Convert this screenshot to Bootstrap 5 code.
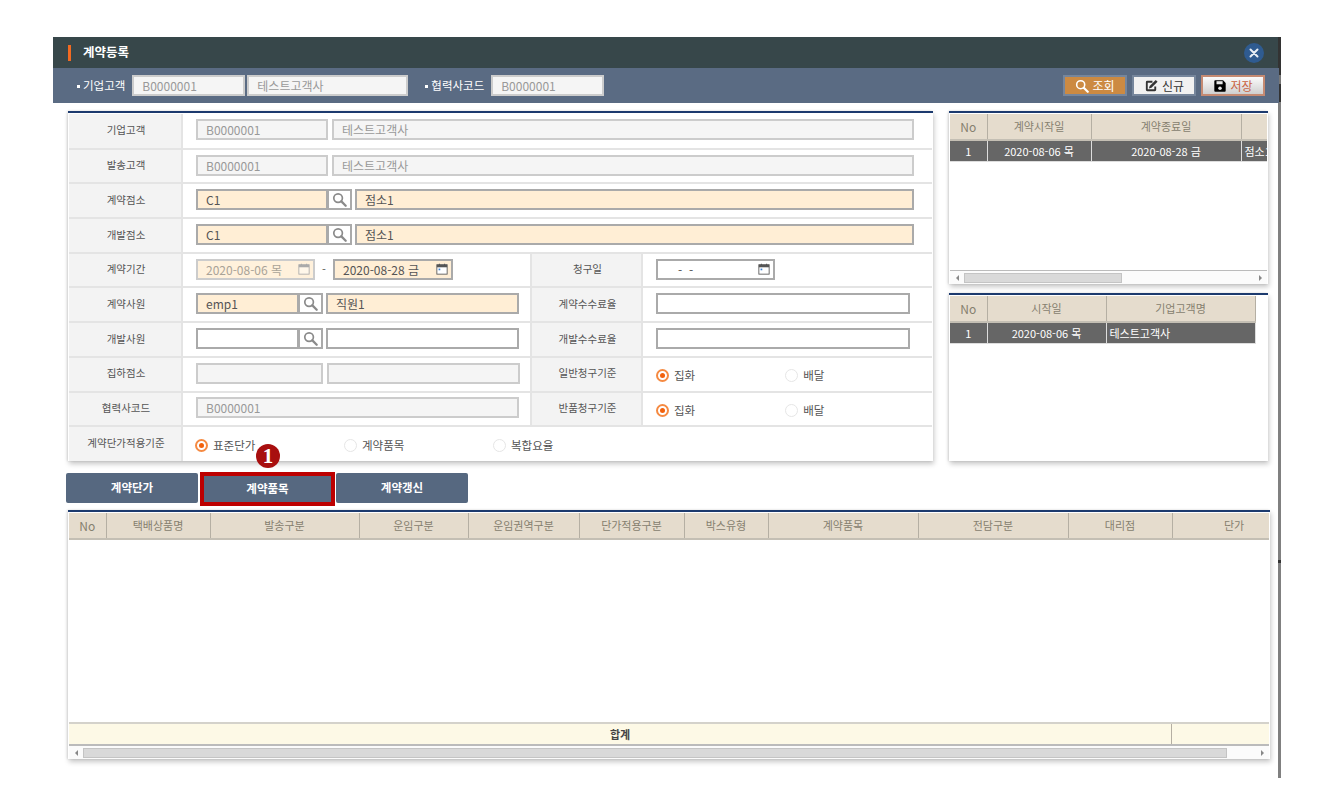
<!DOCTYPE html>
<html lang="ko">
<head>
<meta charset="UTF-8">
<title>계약등록</title>
<link href="https://cdn.jsdelivr.net/npm/bootstrap@5.3.0/dist/css/bootstrap.min.css" rel="stylesheet">
<style>
body { background: #fff; font-family: "Noto Sans CJK KR", "Noto Sans", sans-serif; font-size: 11px; color: #555; }
.win { margin: 37px 0 0 53px; width: 1228px; height: 741px; border-right: 3px solid #808080; border-image: linear-gradient(#333 0 39px, #777 39px 48px, #333 48px 66px, #808080 66px 523px, #333 523px 526px, #808080 526px) 1; }
.win-title { height: 31px; background: #37474a; color: #fff; font-size: 12.5px; font-weight: 700; padding: 0 14px 0 15px; }
.title-mark { width: 3px; height: 16px; background: #f26a21; margin-right: 12px; }
.btn-close-round { width: 20px; height: 20px; border-radius: 50%; background: #2f5b90; margin-left: auto; border: 0; padding: 0; }
.win-tool { height: 35px; background: #5a6b83; padding: 0 14px 0 24px; color: #fff; margin-right: -1px; font-size: 11.5px; }
.tool-label { margin-right: 7px; }
.tool-label::before { content: ""; display: inline-block; width: 3px; height: 3px; background: #fff; margin-right: 3px; vertical-align: middle; }
.tool-label-next { margin-left: 17px; }
.tool-name { margin-left: 2px; }
.tool-btns { gap: 5px; }
.field { height: 21px; border: 2px solid #aaa; background: #fff; color: #555; font-size: 12px; line-height: 17px; padding: 0 8px; white-space: nowrap; overflow: hidden; flex: none; }
.field-off { border-color: #ccc; background: #f5f5f5; color: #999; font-size: 12px; }
.field-req { background: #ffeed5; }
.field-date { display: flex; justify-content: space-between; align-items: center; padding-right: 3px; }
.field-faded { background: #fff1dc; border-color: #ccc; color: #a9a398; }
.find-btn { width: 24px; height: 21px; border: 2px solid #aaa; border-left-width: 1px; background: #fff; margin-right: 3px; flex: none; color: #8a8a8a; }
.tool-btn { width: 64px; height: 21px; font-size: 12px; padding: 0; border: 2px solid #76869c; gap: 3px; color: #333; border-radius: 0; }
.tool-find { background: #cc8a42; color: #fff; }
.tool-new { background: #f1f1f1; }
.tool-save { background: linear-gradient(#fbfbfb, #cfcfcf); border-color: #c58a72; color: #c9623f; }
.win-body { padding: 8px 10px 0 15px; }
.panel { border-top: 2px solid #1c3a6e; box-shadow: 1px 3px 5px rgba(0,0,0,.22), -1px 0 2px rgba(0,0,0,.12); background: #fff; padding: 1px 1px 0; flex: none; }
.form-panel { width: 865px; height: 350px; }
.form-grid { width: 100%; table-layout: fixed; border-collapse: collapse; }
.form-grid tr { height: 34.7px; border-bottom: 2px solid #e4e4e4; }
.form-grid tr:last-child { border-bottom: 0; }
.form-grid th { background: #f3f3f3; font-weight: 400; text-align: center; font-size: 10.5px; color: #555; border-right: 2px solid #e4e4e4; padding: 0 0 2px 2px; }
.form-grid td { padding: 0 0 2px 13px; border-right: 2px solid #e4e4e4; }
.form-grid td:last-child { border-right: 0; }
.opt { width: 149px; gap: 5px; font-size: 11.5px; color: #555; padding-top: 5px; }
.opt-wide { width: 131px; }
.opt-first { margin-left: -1px; }
.opt-dot { width: 13px; height: 13px; border-radius: 50%; border: 1px solid #e6e6e6; background: #fff; flex: none; }
.opt-on { border: 2px solid #f58a42; }
.opt-on::after { content: ""; display: block; width: 5px; height: 5px; border-radius: 50%; background: #f2610c; margin: 2px; }
.side-col { width: 319px; margin-left: 16px; flex: none; }
.side-top { height: 173px; }
.side-bottom { height: 168px; margin-top: 9px; }
.grid-table { table-layout: fixed; border-collapse: collapse; font-size: 11px; }
.grid-table th { height: 26px; background: #e5dccd; color: #85806f; font-weight: 400; text-align: center; border-right: 1px solid #b5afa3; border-bottom: 2px solid #c4bfb4; padding: 0; font-size: 11px; }
.grid-table th.no-col { font-size: 12px; }
.grid-table td { height: 21px; background: #666; color: #fff; text-align: center; border-right: 1px solid #ddd; border-bottom: 1px solid #ddd; padding: 0; white-space: nowrap; overflow: hidden; }
.grid-table td.cell-left { text-align: left; padding-left: 3px; }
.grid-wrap { overflow: hidden; flex: none; }
.hbar { height: 14px; border-top: 1px solid #bbb; padding: 2px 0; background: #fbfbfb; color: #888; }
.hbar-end { width: 14px; flex: none; }
.hbar-arrow { width: 0; height: 0; border-style: solid; border-width: 3px 0 3px 3px; border-color: transparent transparent transparent #888; }
.hbar-arrow-left { border-width: 3px 3px 3px 0; border-color: transparent #888 transparent transparent; }
.hbar-thumb { background: #d9d9d9; border: 1px solid #c4c4c4; height: 10px; }
.tab-row { margin-top: 12px; margin-left: -2px; height: 30px; position: relative; }
.tab-btn { width: 132px; height: 30px; background: #566880; color: #fff; font-weight: 700; font-size: 11.5px; border: 0; border-radius: 2px; padding: 0; margin-right: 3px; flex: none; }
.tab-on { box-shadow: 0 0 0 4px #bd0000; width: 127px; height: 26px; border-radius: 0; margin: 3px 5px 0 3px; align-self: flex-start; }
.step-mark { position: absolute; left: 190px; top: -29px; width: 24px; height: 24px; border-radius: 50%; background: #a80f0f; color: #fff; font: 700 21px/24px "Liberation Serif", serif; text-align: center; }
.main-grid { margin-top: 7px; width: 1202px; height: 249px; }
.grid-body { height: 183px; }
.sum-row { height: 23px; background: #fdf9e6; border-top: 2px solid #d4d2cb; border-bottom: 1px solid #bbb; }
.sum-title { width: 1103px; border-right: 1px solid #b5afa3; font-weight: 700; color: #444; }
</style>
</head>
<body>
<svg width="0" height="0" class="d-block">
  <symbol id="ic-search" viewBox="0 0 16 16"><circle cx="6.500" cy="6.500" r="4.600" fill="none" stroke="currentColor" stroke-width="1.800"/><path d="M10 10l4.600 4.600" stroke="currentColor" stroke-width="2.400" stroke-linecap="round"/></symbol>
  <symbol id="ic-edit" viewBox="0 0 16 16"><path d="M9 3H3.500A1.500 1.500 0 0 0 2 4.500v8A1.500 1.500 0 0 0 3.500 14h8a1.500 1.500 0 0 0 1.500-1.500V9h-2v3H4V5h5z" fill="currentColor"/><path d="M6 8.500l6.500-6.500 2 2-6.500 6.500-2.800.8z" fill="currentColor"/></symbol>
  <symbol id="ic-save" viewBox="0 0 16 16"><path d="M2.500 1.500h9l3 3v9a1 1 0 0 1-1 1h-11a1 1 0 0 1-1-1v-11a1 1 0 0 1 1-1z" fill="currentColor"/><rect x="4" y="2.500" width="7" height="3.500" fill="#e8e8e8"/><circle cx="8" cy="10.500" r="2" fill="#e8e8e8"/></symbol>
  <symbol id="ic-cal" viewBox="0 0 14 14"><rect x="1" y="2" width="12" height="11" fill="#fff" stroke="#555"/><rect x="1" y="2" width="12" height="3" fill="#555"/><path d="M4 .8v2M10 .8v2" stroke="#555" stroke-width="1.200"/><rect x="3" y="6.500" width="2" height="2" fill="#3b82d6"/></symbol>
  <symbol id="ic-cal-off" viewBox="0 0 14 14"><rect x="1" y="2" width="12" height="11" fill="#fff7ea" stroke="#aaa"/><rect x="1" y="2" width="12" height="3" fill="#aaa"/><path d="M4 .8v2M10 .8v2" stroke="#aaa" stroke-width="1.200"/></symbol>
</svg>

<div class="win">
  <div class="win-title d-flex align-items-center">
    <span class="title-mark"></span>계약등록
    <button class="btn-close-round d-flex align-items-center justify-content-center" type="button" aria-label="닫기">
      <svg width="10" height="10" viewBox="0 0 10 10"><path d="M1.500 1.500l7 7M8.500 1.500l-7 7" stroke="#e8eef5" stroke-width="2" stroke-linecap="round"/></svg>
    </button>
  </div>

  <div class="win-tool d-flex align-items-center">
    <span class="tool-label">기업고객</span>
    <div class="field field-off" style="width:113px">B0000001</div>
    <div class="field field-off tool-name" style="width:161px">테스트고객사</div>
    <span class="tool-label tool-label-next">협력사코드</span>
    <div class="field field-off" style="width:113px">B0000001</div>
    <div class="d-flex ms-auto tool-btns">
      <button class="btn tool-btn tool-find d-flex align-items-center justify-content-center" type="button"><svg width="14" height="14"><use href="#ic-search"/></svg>조회</button>
      <button class="btn tool-btn tool-new d-flex align-items-center justify-content-center" type="button"><svg width="15" height="15"><use href="#ic-edit"/></svg>신규</button>
      <button class="btn tool-btn tool-save d-flex align-items-center justify-content-center" type="button"><svg width="14" height="14" class="text-black"><use href="#ic-save"/></svg>저장</button>
    </div>
  </div>

  <div class="win-body">
    <div class="d-flex">
      <div class="panel form-panel">
        <table class="form-grid">
          <colgroup><col style="width:113px"><col style="width:349px"><col style="width:111px"><col></colgroup>
          <tr><th>기업고객</th><td colspan="3"><div class="d-flex gap-1"><div class="field field-off" style="width:132px">B0000001</div><div class="field field-off" style="width:582px">테스트고객사</div></div></td></tr>
          <tr><th>발송고객</th><td colspan="3"><div class="d-flex gap-1"><div class="field field-off" style="width:132px">B0000001</div><div class="field field-off" style="width:582px">테스트고객사</div></div></td></tr>
          <tr><th>계약점소</th><td colspan="3"><div class="d-flex"><div class="field field-req" style="width:132px">C1</div><div class="find-btn d-flex align-items-center justify-content-center"><svg width="15" height="15"><use href="#ic-search"/></svg></div><div class="field field-req" style="width:559px">점소1</div></div></td></tr>
          <tr><th>개발점소</th><td colspan="3"><div class="d-flex"><div class="field field-req" style="width:132px">C1</div><div class="find-btn d-flex align-items-center justify-content-center"><svg width="15" height="15"><use href="#ic-search"/></svg></div><div class="field field-req" style="width:559px">점소1</div></div></td></tr>
          <tr>
            <th>계약기간</th>
            <td><div class="d-flex align-items-center"><div class="field field-date field-faded" style="width:119px">2020-08-06 목<svg width="12" height="12"><use href="#ic-cal-off"/></svg></div><span class="text-center" style="width:18px">-</span><div class="field field-req field-date" style="width:120px">2020-08-28 금<svg width="12" height="12"><use href="#ic-cal"/></svg></div></div></td>
            <th>청구일</th>
            <td><div class="field field-date" style="width:119px"><span class="ps-2 ms-1">- &nbsp;-</span><svg width="12" height="12"><use href="#ic-cal"/></svg></div></td>
          </tr>
          <tr>
            <th>계약사원</th>
            <td><div class="d-flex"><div class="field field-req" style="width:103px">emp1</div><div class="find-btn d-flex align-items-center justify-content-center"><svg width="15" height="15"><use href="#ic-search"/></svg></div><div class="field field-req" style="width:193px">직원1</div></div></td>
            <th>계약수수료율</th>
            <td><div class="field" style="width:254px"></div></td>
          </tr>
          <tr>
            <th>개발사원</th>
            <td><div class="d-flex"><div class="field" style="width:103px"></div><div class="find-btn d-flex align-items-center justify-content-center"><svg width="15" height="15"><use href="#ic-search"/></svg></div><div class="field" style="width:193px"></div></div></td>
            <th>개발수수료율</th>
            <td><div class="field" style="width:254px"></div></td>
          </tr>
          <tr>
            <th>집하점소</th>
            <td><div class="d-flex gap-1"><div class="field field-off" style="width:127px"></div><div class="field field-off" style="width:193px"></div></div></td>
            <th>일반청구기준</th>
            <td><div class="d-flex"><label class="opt opt-wide d-flex align-items-center"><span class="opt-dot opt-on"></span>집화</label><label class="opt d-flex align-items-center"><span class="opt-dot"></span>배달</label></div></td>
          </tr>
          <tr>
            <th>협력사코드</th>
            <td><div class="field field-off" style="width:323px">B0000001</div></td>
            <th>반품청구기준</th>
            <td><div class="d-flex"><label class="opt opt-wide d-flex align-items-center"><span class="opt-dot opt-on"></span>집화</label><label class="opt d-flex align-items-center"><span class="opt-dot"></span>배달</label></div></td>
          </tr>
          <tr>
            <th>계약단가적용기준</th>
            <td colspan="3"><div class="d-flex opt-first"><label class="opt d-flex align-items-center"><span class="opt-dot opt-on"></span>표준단가</label><label class="opt d-flex align-items-center"><span class="opt-dot"></span>계약품목</label><label class="opt d-flex align-items-center"><span class="opt-dot"></span>복합요율</label></div></td>
          </tr>
        </table>
      </div>

      <div class="side-col">
        <div class="panel side-top d-flex flex-column">
          <div class="grid-wrap flex-grow-1">
            <table class="grid-table" style="width:329px">
              <colgroup><col style="width:37px"><col style="width:104px"><col style="width:150px"><col style="width:38px"></colgroup>
              <tr><th class="no-col">No</th><th>계약시작일</th><th>계약종료일</th><th></th></tr>
              <tr><td>1</td><td>2020-08-06 목</td><td>2020-08-28 금</td><td class="cell-left">점소1</td></tr>
            </table>
          </div>
          <div class="hbar d-flex align-items-center">
            <span class="hbar-end d-flex justify-content-center"><span class="hbar-arrow hbar-arrow-left"></span></span>
            <span class="hbar-thumb" style="width:158px"></span>
            <span class="hbar-end d-flex justify-content-center ms-auto"><span class="hbar-arrow"></span></span>
          </div>
        </div>
        <div class="panel side-bottom">
          <table class="grid-table" style="width:305px">
            <colgroup><col style="width:37px"><col style="width:119px"><col style="width:149px"></colgroup>
            <tr><th class="no-col">No</th><th>시작일</th><th>기업고객명</th></tr>
            <tr><td>1</td><td>2020-08-06 목</td><td class="cell-left">테스트고객사</td></tr>
          </table>
        </div>
      </div>
    </div>

    <div class="tab-row d-flex">
      <button class="tab-btn" type="button">계약단가</button>
      <button class="tab-btn tab-on" type="button">계약품목</button>
      <button class="tab-btn" type="button">계약갱신</button>
      <span class="step-mark">1</span>
    </div>

    <div class="panel main-grid d-flex flex-column">
      <div class="grid-wrap">
        <table class="grid-table" style="width:1227px">
          <colgroup><col style="width:37px"><col style="width:104px"><col style="width:149px"><col style="width:109px"><col style="width:111px"><col style="width:105px"><col style="width:84px"><col style="width:150px"><col style="width:150px"><col style="width:104px"><col style="width:124px"></colgroup>
          <tr><th class="no-col">No</th><th>택배상품명</th><th>발송구분</th><th>운임구분</th><th>운임권역구분</th><th>단가적용구분</th><th>박스유형</th><th>계약품목</th><th>전담구분</th><th>대리점</th><th>단가</th></tr>
        </table>
      </div>
      <div class="grid-body"></div>
      <div class="sum-row d-flex">
        <div class="sum-title d-flex align-items-center justify-content-center">합계</div>
      </div>
      <div class="hbar d-flex align-items-center">
        <span class="hbar-end d-flex justify-content-center"><span class="hbar-arrow hbar-arrow-left"></span></span>
        <span class="hbar-thumb" style="width:1144px"></span>
        <span class="hbar-end d-flex justify-content-center ms-auto"><span class="hbar-arrow"></span></span>
      </div>
    </div>
  </div>
</div>
<script src="https://cdn.jsdelivr.net/npm/bootstrap@5.3.0/dist/js/bootstrap.bundle.min.js"></script>
</body>
</html>
